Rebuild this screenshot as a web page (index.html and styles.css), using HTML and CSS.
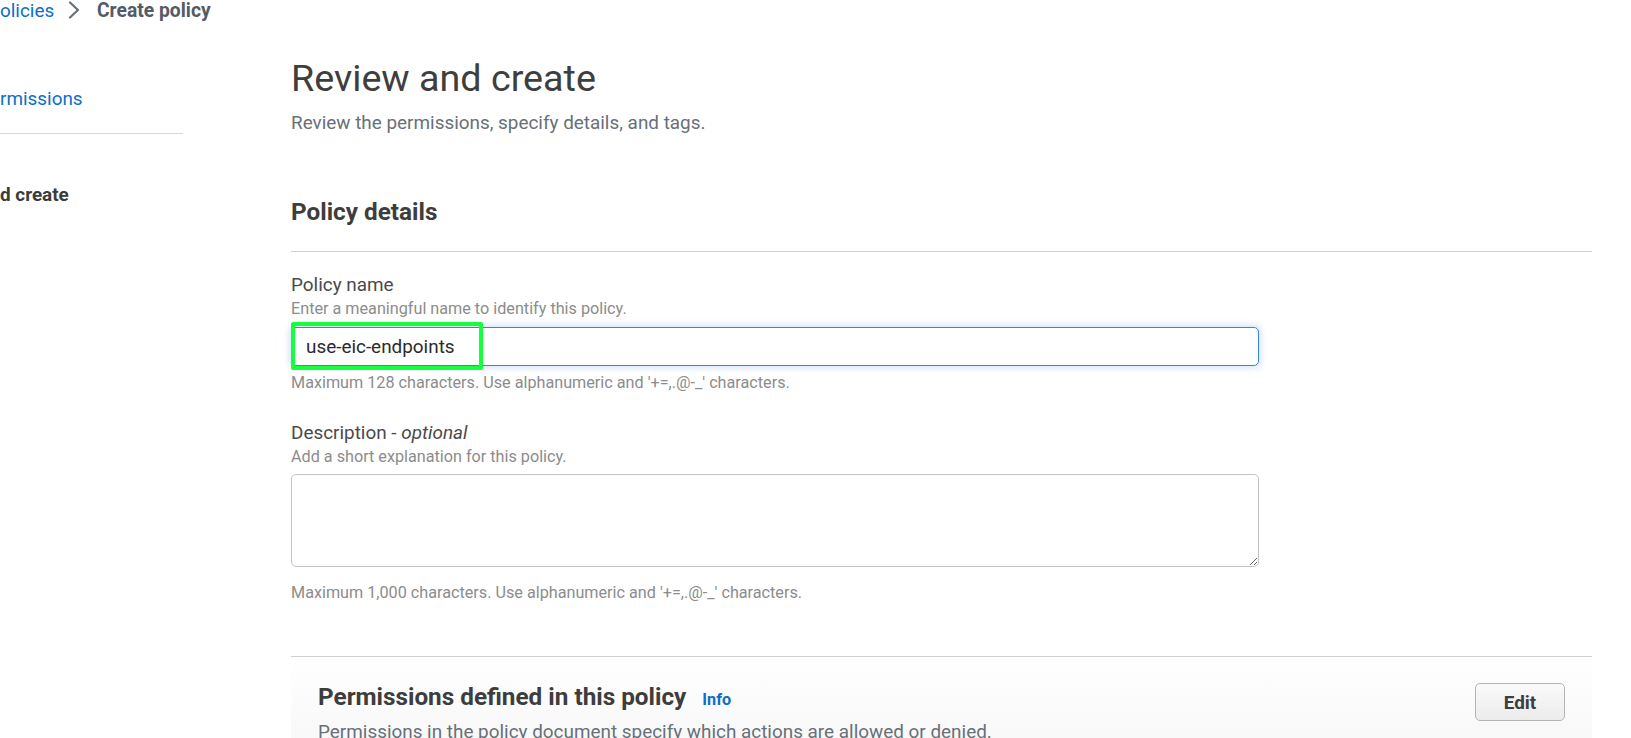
FILE: index.html
```html
<!DOCTYPE html>
<html lang="en">
<head>
<meta charset="utf-8">
<title>Create policy</title>
<link rel="stylesheet" href="styles.css">
</head>
<body>
<nav class="breadcrumb">
  <a class="crumb-link" href="#">olicies</a>
  <svg class="crumb-sep" width="12" height="18" viewBox="0 0 12 18" aria-hidden="true"><path d="M2 1.5 L10 9 L2 16.5" fill="none" stroke="#687078" stroke-width="2.2" stroke-linecap="round" stroke-linejoin="round"/></svg>
  <span class="crumb-current">Create policy</span>
</nav>
<div class="layout">
  <aside class="steps">
    <div class="step step-done"><a href="#">rmissions</a></div>
    <div class="step step-active">d create</div>
  </aside>
  <main class="main">
    <h1 class="title">Review and create</h1>
    <p class="subtitle">Review the permissions, specify details, and tags.</p>
    <h2 class="section-title">Policy details</h2>
    <div class="divider"></div>

    <label class="field-label" for="pname">Policy name</label>
    <div class="field-desc">Enter a meaningful name to identify this policy.</div>
    <div class="input-wrap">
      <input id="pname" class="text-input" type="text" value="use-eic-endpoints">
      <span class="highlight"></span>
    </div>
    <div class="field-help">Maximum 128 characters. Use alphanumeric and '+=,.@-_' characters.</div>

    <label class="field-label field-label-gap" for="pdesc">Description - <i>optional</i></label>
    <div class="field-desc">Add a short explanation for this policy.</div>
    <textarea id="pdesc" class="text-area"></textarea>
    <div class="field-help field-help-gap">Maximum 1,000 characters. Use alphanumeric and '+=,.@-_' characters.</div>

    <div class="divider divider-bottom"></div>
    <section class="panel">
      <div class="panel-head">
        <div class="panel-text">
          <h2 class="panel-title">Permissions defined in this policy <a class="info" href="#">Info</a></h2>
          <p class="panel-desc">Permissions in the policy document specify which actions are allowed or denied.</p>
        </div>
        <button class="edit-btn" type="button">Edit</button>
      </div>
    </section>
  </main>
</div>
</body>
</html>
```

FILE: styles.css
```css
html, body {
  margin: 0;
  padding: 0;
  background: #ffffff;
  overflow: hidden;
}
body {
  font-family: Roboto, "Noto Sans", Arial, sans-serif;
  font-size: 18.9px;
  color: #16191f;
  width: 1631px;
  height: 738px;
}
a { text-decoration: none; }

.breadcrumb {
  display: flex;
  align-items: flex-start;
  height: 22px;
  line-height: 22px;
  font-size: 18.9px;
}
.crumb-link {
  color: #0b6fc6;
  width: 54px;
}
.crumb-sep {
  margin-left: 14px;
  margin-top: 1px;
  width: 12px;
}
.crumb-current {
  margin-left: 17px;
  font-weight: 700;
  font-size: 19.3px;
  color: #545b64;
}

.layout {
  display: grid;
  grid-template-columns: 183px 1301px;
  column-gap: 108px;
}

.steps {
  display: flex;
  flex-direction: column;
}
.step {
  font-size: 18.9px;
  line-height: 22px;
}
.step-done {
  margin-top: 66px;
  padding-bottom: 23px;
  border-bottom: 1px solid #d5dbdb;
}
.step-done a { color: #0b6fc6; }
.step-active {
  margin-top: 50px;
  font-weight: 700;
  color: #3b3b3b;
}

.main {
  display: flex;
  flex-direction: column;
  align-items: flex-start;
}
.title {
  margin: 34px 0 0;
  font-size: 37.7px;
  line-height: 44px;
  font-weight: 400;
  color: #3e3e3e;
}
.subtitle {
  margin: 12px 0 0;
  line-height: 22px;
  color: #687078;
}
.section-title {
  margin: 63px 0 0;
  font-size: 24.3px;
  line-height: 30px;
  font-weight: 700;
  color: #3d3d3d;
}
.divider {
  align-self: stretch;
  height: 1px;
  background: #cfcfcf;
  margin-top: 24px;
}
.divider-bottom { margin-top: 53px; }

.field-label {
  margin-top: 22px;
  line-height: 22px;
  color: #4a4a4a;
}
.field-label-gap { margin-top: 29px; }
.field-label i { font-style: italic; }
.field-desc {
  margin-top: 3px;
  font-size: 16.2px;
  line-height: 20px;
  color: #8c8c8c;
}
.input-wrap {
  position: relative;
  margin-top: 8px;
  width: 968px;
  height: 39px;
}
.text-input {
  box-sizing: border-box;
  width: 968px;
  height: 39px;
  margin: 0;
  padding: 0 14px;
  border: 1px solid #3585e2;
  border-radius: 5px;
  box-shadow: 0 0 6px 2px rgba(53, 133, 226, 0.22);
  font-family: Roboto, "Noto Sans", Arial, sans-serif;
  font-size: 18.9px;
  color: #2b2b2b;
  outline: none;
  background: #fff;
}
.highlight {
  position: absolute;
  left: 0;
  top: -5px;
  width: 192px;
  height: 48px;
  box-sizing: border-box;
  border: 4px solid #14ff3c;
  border-radius: 2px;
}
.field-help {
  margin-top: 7px;
  font-size: 16.2px;
  line-height: 20px;
  color: #8c8c8c;
}
.field-help-gap { margin-top: 16px; }
.text-area {
  box-sizing: border-box;
  margin: 7px 0 0;
  width: 968px;
  height: 93px;
  border: 1px solid #c4c4c4;
  border-radius: 5px;
  resize: vertical;
  font-family: Roboto, "Noto Sans", Arial, sans-serif;
  font-size: 18.9px;
  outline: none;
  background: #fff;
}

.panel {
  align-self: stretch;
  background: linear-gradient(to bottom, #ffffff 0, #f9f9f9 70px, #f8f8f8 100%);
  padding: 26px 27px 20px;
  min-height: 100px;
}
.panel-head {
  display: flex;
  justify-content: space-between;
  align-items: flex-start;
}
.panel-title {
  margin: 0;
  font-size: 24.3px;
  line-height: 28px;
  font-weight: 700;
  color: #3d3d3d;
}
.info {
  margin-left: 10px;
  font-size: 16.2px;
  font-weight: 700;
  color: #0b6fc6;
}
.panel-desc {
  margin: 7px 0 0;
  line-height: 22px;
  color: #687078;
}
.edit-btn {
  box-sizing: border-box;
  width: 90px;
  height: 38px;
  margin: 0;
  padding: 0;
  border: 1px solid #b3b3b3;
  border-radius: 5px;
  background: linear-gradient(to bottom, #fafafa, #ececec);
  font-family: Roboto, "Noto Sans", Arial, sans-serif;
  font-size: 18.9px;
  font-weight: 700;
  color: #3d3d3d;
}
```
